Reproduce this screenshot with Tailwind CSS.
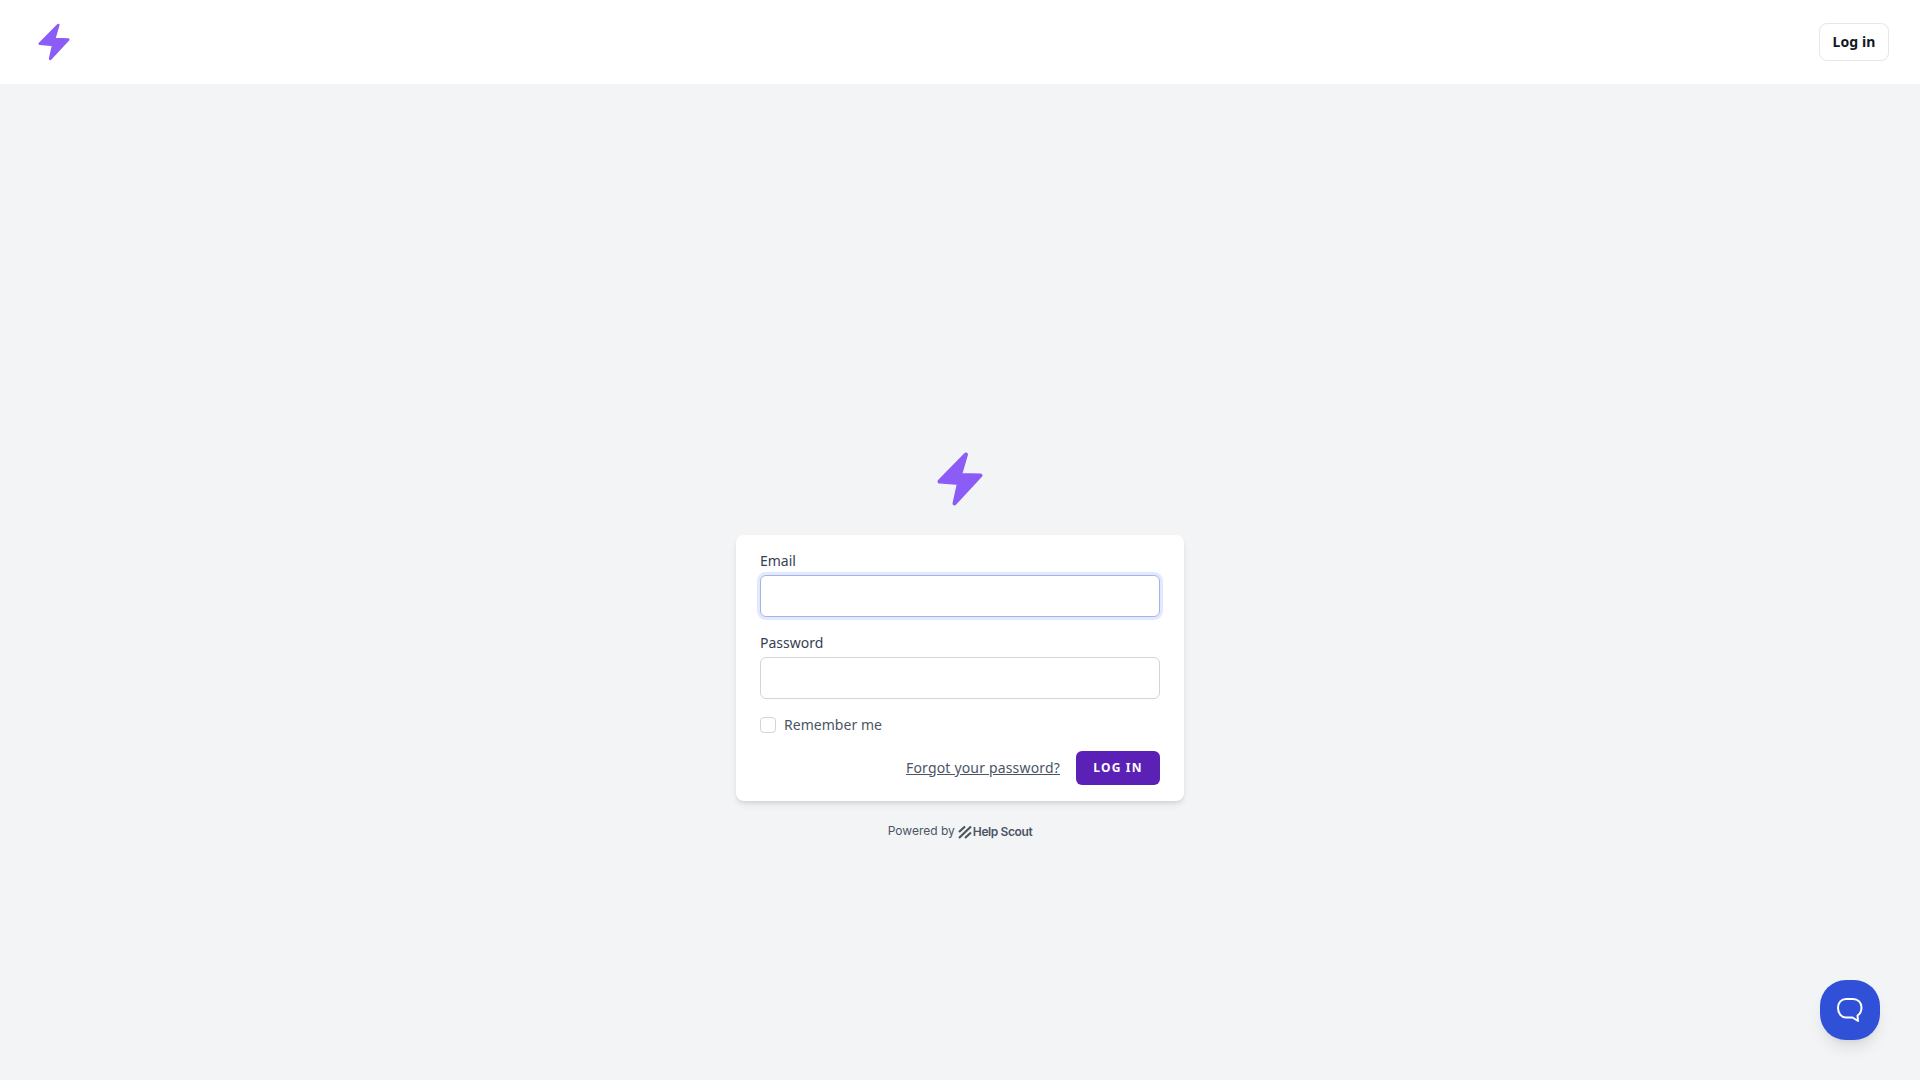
<!DOCTYPE html>
<html lang="en">
<head>
    <meta charset="UTF-8">
    <meta name="viewport" content="width=device-width, initial-scale=1.0">
    <title>Log in</title>
    <script src="https://cdn.jsdelivr.net/npm/@tailwindcss/browser@4"></script>
</head>
<body class="bg-[#f3f4f6] font-['Noto_Sans',sans-serif] h-screen overflow-hidden">
    <header class="bg-white h-[84px] flex items-center justify-between pl-[37px] pr-[31px]">
        <svg class="w-[34px] h-[40px]" viewBox="0 0 48 58" fill="#8b5cf6" stroke="#8b5cf6" stroke-width="4" stroke-linejoin="round">
            <path d="M30 4.5 L3.5 31.5 L23 33 L18.5 53.5 L44.5 25.5 L24 25 Z"/>
        </svg>
        <a href="#" class="w-[70px] h-[38px] pb-[2px] flex items-center justify-center bg-white border border-gray-200 rounded-lg text-[14px] font-bold tracking-[0.1px] text-gray-900">Log in</a>
    </header>

    <main class="flex flex-col items-center pt-[366px]">
        <svg class="w-[48px] h-[58px]" viewBox="0 0 48 58" fill="#8b5cf6" stroke="#8b5cf6" stroke-width="4" stroke-linejoin="round">
            <path d="M30 4.5 L3.5 31.5 L23 33 L18.5 53.5 L44.5 25.5 L24 25 Z"/>
        </svg>

        <form class="mt-[27px] w-[448px] h-[266px] bg-white rounded-lg shadow-md px-6 pt-[14px]">
            <label for="email" class="block text-[14px] leading-[24px] text-gray-700">Email</label>
            <input type="email" id="email" class="block w-full h-[42px] mt-[2px] bg-white border border-[#a5b4e8] rounded-md ring-[3px] ring-[#c7d2fe]/50">
            <label for="password" class="block text-[14px] leading-[24px] text-gray-700 mt-[14px]">Password</label>
            <input type="password" id="password" class="block w-full h-[42px] mt-[2px] bg-white border border-gray-300 rounded-md">
            <label class="flex items-center mt-[18px] h-[16px]">
                <span class="w-4 h-4 bg-white border border-gray-300 rounded"></span>
                <span class="ml-2 mb-[2px] text-[14px] tracking-[0.03px] text-gray-600">Remember me</span>
            </label>
            <div class="flex items-center justify-end mt-[18px]">
                <a href="#" class="mb-[2px] text-[14px] tracking-[0.17px] text-gray-600 underline">Forgot your password?</a>
                <button type="button" class="ml-4 w-[84px] h-[34px] bg-[#5b21b6] rounded-md text-white text-[12px] font-bold tracking-widest">LOG IN</button>
            </div>
        </form>

        <div class="mt-[21px] flex items-center text-[12px] text-gray-600 font-['Inter',sans-serif]">
            <span class="mb-[1px]">Powered by</span>
            <svg class="w-[14px] h-[14px] ml-[3px]" viewBox="0 0 14 14" fill="none" stroke="#4b5563" stroke-width="2.2">
                <path d="M1 7 L7 1.5 M1 13 L13 1.5 M7 13 L13 7.5"/>
            </svg>
            <span class="font-semibold tracking-[-0.4px] ml-[1px]">Help Scout</span>
        </div>
    </main>

    <button class="fixed left-[1820px] top-[980px] w-[60px] h-[60px] bg-[#3050d8] rounded-[26px] shadow-lg flex items-center justify-center">
        <svg class="w-[26px] h-[26px]" viewBox="0 0 26 26" fill="none" stroke="white" stroke-width="2" stroke-linejoin="round">
            <path d="M9 2 H16 C21 2 24.5 5.5 24.5 10.5 C24.5 14.5 23 17 20.5 18.5 L21 24 L15.5 20.5 H9 C4.5 20.5 1 16.5 1 11 C1 5.5 4.5 2 9 2 Z"/>
        </svg>
    </button>
</body>
</html>
